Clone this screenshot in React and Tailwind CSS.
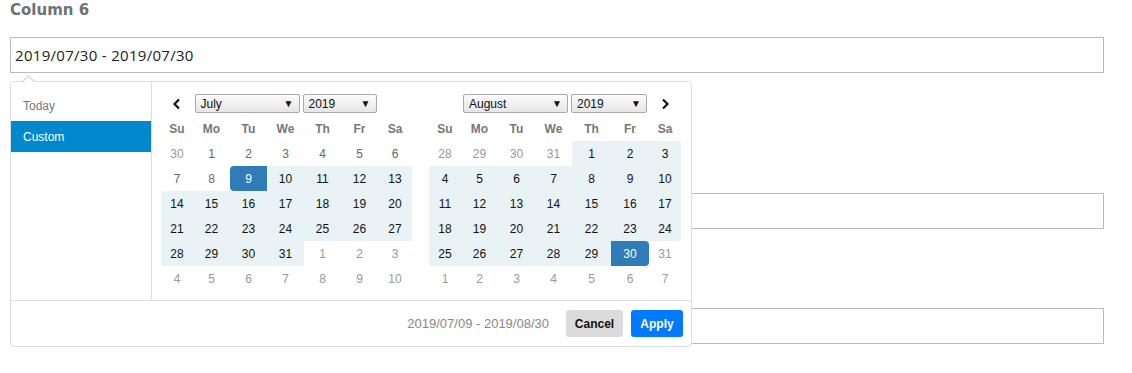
import React from "react";

const julyRows = [
  [["30", "off"], ["1"], ["2"], ["3"], ["4"], ["5"], ["6"]],
  [["7"], ["8"], ["9", "start"], ["10", "in"], ["11", "in"], ["12", "in"], ["13", "in"]],
  [["14", "in"], ["15", "in"], ["16", "in"], ["17", "in"], ["18", "in"], ["19", "in"], ["20", "in"]],
  [["21", "in"], ["22", "in"], ["23", "in"], ["24", "in"], ["25", "in"], ["26", "in"], ["27", "in"]],
  [["28", "in"], ["29", "in"], ["30", "in"], ["31", "in"], ["1", "off"], ["2", "off"], ["3", "off"]],
  [["4", "off"], ["5", "off"], ["6", "off"], ["7", "off"], ["8", "off"], ["9", "off"], ["10", "off"]],
];

const augRows = [
  [["28", "off"], ["29", "off"], ["30", "off"], ["31", "off"], ["1", "in"], ["2", "in"], ["3", "in"]],
  [["4", "in"], ["5", "in"], ["6", "in"], ["7", "in"], ["8", "in"], ["9", "in"], ["10", "in"]],
  [["11", "in"], ["12", "in"], ["13", "in"], ["14", "in"], ["15", "in"], ["16", "in"], ["17", "in"]],
  [["18", "in"], ["19", "in"], ["20", "in"], ["21", "in"], ["22", "in"], ["23", "in"], ["24", "in"]],
  [["25", "in"], ["26", "in"], ["27", "in"], ["28", "in"], ["29", "in"], ["30", "end"], ["31", "off"]],
  [["1", "off"], ["2", "off"], ["3", "off"], ["4", "off"], ["5", "off"], ["6", "off"], ["7", "off"]],
];

const days = ["Su", "Mo", "Tu", "We", "Th", "Fr", "Sa"];

function cellClass(kind) {
  const base = "h-[25px] flex items-center justify-center ";
  if (kind === "off") return base + "text-[#999]";
  if (kind === "in") return base + "bg-[#e9f3f5] text-[#111]";
  if (kind === "start") return base + "bg-[#2f7cb8] text-white rounded-l-[4px]";
  if (kind === "end") return base + "bg-[#2f7cb8] text-white rounded-r-[4px]";
  return base + "text-[#666]";
}

function Select({ label, width }) {
  return (
    <div
      className={`${width} h-[19px] border border-[#a9a9a9] rounded-[2px] bg-gradient-to-b from-[#fbfbfb] to-[#e6e6e6] flex items-center justify-between pl-[5px] pr-[5px] text-[12px] text-[#111]`}
    >
      <span>{label}</span>
      <span className="text-[10px] leading-none">▼</span>
    </div>
  );
}

function Calendar({ cols, month, rows, prev, next }) {
  return (
    <div className={`grid content-start self-start ${cols} text-[12px] font-['Liberation_Sans',Arial,sans-serif]`}>
      <div className="h-[25px] flex items-center justify-center">
        {prev && (
          <svg width="10" height="12" viewBox="0 0 10 12">
            <path d="M7 1.5 L2.5 6 L7 10.5" fill="none" stroke="#111" strokeWidth="2.2" />
          </svg>
        )}
      </div>
      <div className="col-span-5 h-[25px] flex items-center justify-center gap-[3px]">
        <Select label={month} width="w-[105px]" />
        <Select label="2019" width={prev ? "w-[74px]" : "w-[76px]"} />
      </div>
      <div className="h-[25px] flex items-center justify-center">
        {next && (
          <svg width="10" height="12" viewBox="0 0 10 12">
            <path d="M3 1.5 L7.5 6 L3 10.5" fill="none" stroke="#111" strokeWidth="2.2" />
          </svg>
        )}
      </div>
      {days.map((d) => (
        <div key={d} className="h-[25px] flex items-center justify-center font-bold text-[#777]">
          {d}
        </div>
      ))}
      {rows.map((r, i) =>
        r.map(([n, k], j) => (
          <div key={`${i}-${j}`} className={cellClass(k)}>
            {n}
          </div>
        ))
      )}
    </div>
  );
}

export default function App() {
  return (
    <div className="relative w-[1132px] h-[373px] bg-white overflow-hidden pl-[10px] pr-[28px]">
      <div className="h-[20px] pt-[1px] text-[15px] leading-[18px] font-bold text-[#717171] font-['DejaVu_Sans',sans-serif]">
        Column 6
      </div>
      <div className="mt-[17px] h-[36px] border border-[#bbb] flex items-center pl-[4px] text-[15px] tracking-[0.3px] text-[#222] font-['Open_Sans',sans-serif]">
        2019/07/30 - 2019/07/30
      </div>
      <div className="mt-[120px] h-[36px] border border-[#bbb]" />
      <div className="mt-[79px] h-[36px] border border-[#bbb]" />

      {/* Date range popup */}
      <div className="absolute left-[10px] top-[81px] w-[682px] h-[266px] bg-white border border-[#ddd] rounded-[4px] flex flex-col font-['Liberation_Sans',Arial,sans-serif]">
        <div className="absolute left-[13px] top-[-5px] w-[9px] h-[9px] rotate-45 bg-white border-l border-t border-[#ccc]" />
        <div className="flex h-[219px] border-b border-[#ddd]">
          <div className="w-[141px] border-r border-[#ddd] pt-[8px] text-[12px]">
            <div className="h-[31px] flex items-center pl-[12px] text-[#777]">Today</div>
            <div className="h-[31px] flex items-center pl-[12px] bg-[#0088cc] text-white">Custom</div>
          </div>
          <div className="flex items-start pl-[9px] pt-[9px] gap-[17px]">
            <Calendar
              cols="grid-cols-[32px_37px_37px_37px_37px_37px_34px]"
              month="July"
              rows={julyRows}
              prev
            />
            <Calendar
              cols="grid-cols-[32px_37px_37px_37px_39px_38px_32px]"
              month="August"
              rows={augRows}
              next
            />
          </div>
        </div>
        <div className="flex-1 flex items-center justify-end pr-[8px] gap-[8px] text-[12px]">
          <span className="text-[13px] text-[#888] mr-[9px]">2019/07/09 - 2019/08/30</span>
          <button className="h-[27px] w-[57px] rounded-[3px] bg-[#dbdbdb] font-bold text-[#111]">Cancel</button>
          <button className="h-[27px] w-[52px] rounded-[3px] bg-[#007bff] font-bold text-white">Apply</button>
        </div>
      </div>
    </div>
  );
}
